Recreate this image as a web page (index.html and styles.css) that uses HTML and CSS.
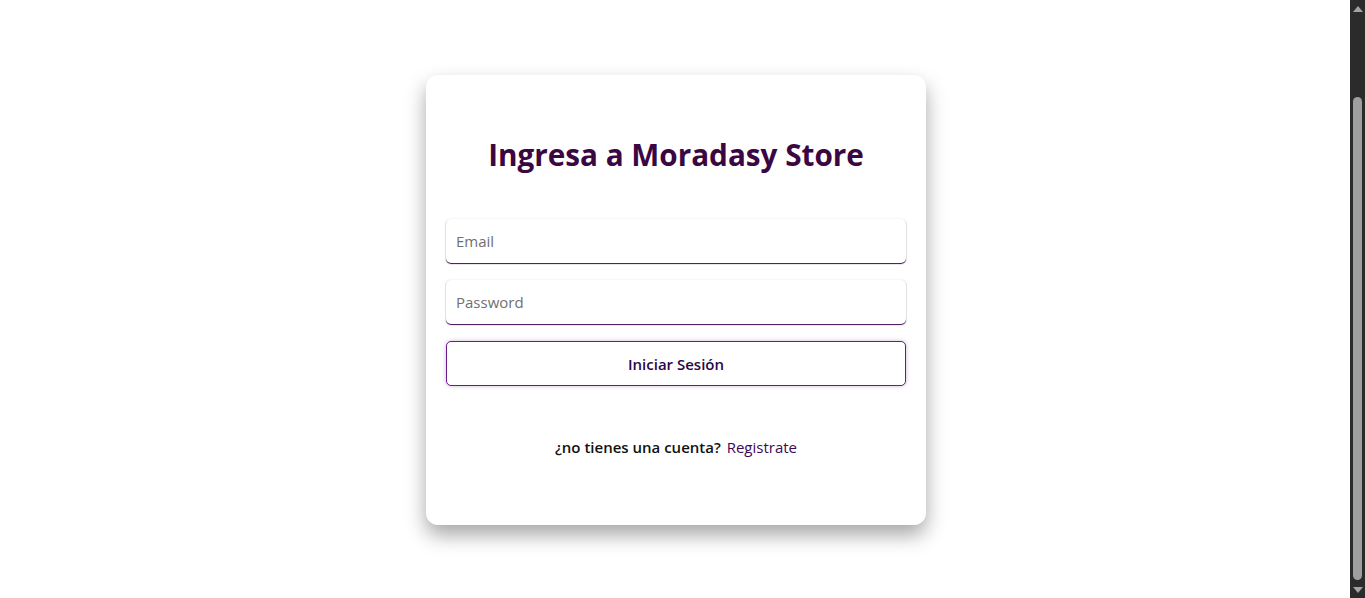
FILE: index.html
```html
<!DOCTYPE html>
<html lang="es">
<head>
<meta charset="utf-8">
<title>Moradasy Store</title>
<link rel="stylesheet" href="styles.css">
</head>
<body>
<main class="page">
  <section class="card">
    <h1 class="title">Ingresa a Moradasy Store</h1>
    <form class="form">
      <input class="field" type="email" placeholder="Email">
      <input class="field" type="password" placeholder="Password">
      <button class="submit" type="button">Iniciar Sesión</button>
    </form>
    <p class="signup">¿no tienes una cuenta? <a class="signup-link" href="#">Registrate</a></p>
  </section>
</main>
<div class="scrollbar" aria-hidden="true">
  <span class="sb-arrow sb-up"></span>
  <span class="sb-track"><span class="sb-thumb"></span></span>
  <span class="sb-arrow sb-down"></span>
</div>
<script src="script.js"></script>
</body>
</html>
```

FILE: styles.css
```css
html {
  background: #ffffff;
}
body {
  margin: 0;
  background: #ffffff;
  color: #000000;
  font-family: "Open Sans", "Noto Sans", sans-serif;
}
.page {
  display: flex;
  justify-content: center;
  padding: 175px 13px 73px 0;
}
.card {
  width: 500px;
  height: 450px;
  box-sizing: border-box;
  padding: 0 20px;
  background: #ffffff;
  border-radius: 12px;
  box-shadow: 0 10px 20px rgba(0, 0, 0, 0.35);
  display: flex;
  flex-direction: column;
}
.title {
  margin: 62px 0 0;
  height: 36px;
  line-height: 36px;
  text-align: center;
  font-size: 29.7px;
  font-weight: 700;
  color: #3a0742;
}
.form {
  margin-top: 46px;
  display: flex;
  flex-direction: column;
  gap: 17px;
}
.field {
  height: 44px;
  box-sizing: border-box;
  border: none;
  border-radius: 5px;
  padding: 0 10px;
  font-family: inherit;
  font-size: 15px;
  color: #222;
  background: #ffffff;
  box-shadow: 0 0 2px rgba(0, 0, 0, 0.12), 0 1px 1px #420c55;
  outline: none;
}
.field::placeholder {
  color: #707070;
}
.submit {
  height: 45px;
  border: 1px solid #6a1a8a;
  border-radius: 5px;
  background: #ffffff;
  font-family: inherit;
  font-size: 15px;
  font-weight: 600;
  color: #2a0845;
  box-shadow: 0 0 4px rgba(90, 20, 120, 0.3);
  cursor: pointer;
}
.signup {
  margin: 51px 0 0;
  text-align: center;
  font-size: 15px;
  font-weight: 600;
  color: #111;
}
.signup-link {
  margin-left: 2px;
  font-weight: 400;
  color: #3a0a55;
  text-decoration: none;
}

/* browser scrollbar (dark) */
.scrollbar {
  position: fixed;
  top: 0;
  right: 0;
  width: 15px;
  height: 100vh;
  background: #2b2b2b;
  display: flex;
  flex-direction: column;
}
.sb-arrow {
  height: 17px;
  flex: none;
  display: flex;
  justify-content: center;
  align-items: center;
}
.sb-up::before,
.sb-down::before {
  content: "";
  width: 0;
  height: 0;
  border-left: 5px solid transparent;
  border-right: 5px solid transparent;
}
.sb-up::before {
  border-bottom: 6px solid #a3a3a3;
}
.sb-down::before {
  border-top: 6px solid #a3a3a3;
}
.sb-track {
  flex: 1;
  display: flex;
  flex-direction: column;
  justify-content: flex-end;
  padding: 0 3px 1px;
}
.sb-thumb {
  height: 483px;
  background: #9f9f9f;
  border-radius: 5px;
}
```

FILE: script.js
```js
window.addEventListener('load', function () {
  window.scrollTo(0, document.documentElement.scrollHeight);
});
window.scrollTo(0, document.documentElement.scrollHeight);
```
